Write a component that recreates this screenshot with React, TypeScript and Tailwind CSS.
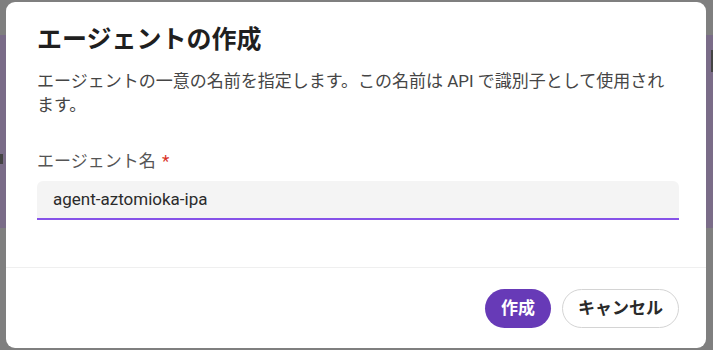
import React from "react";

export default function App() {
  return (
    <div
      className="relative w-[713px] h-[350px] overflow-hidden bg-[#7f7f7f]"
      style={{ fontFamily: "Roboto, 'Noto Sans CJK JP', 'Noto Sans', sans-serif" }}
    >
      {/* dimmed background page */}
      <div className="absolute left-0 right-0 top-[35px] h-[193px] bg-[#7a6c88]" />
      <div className="absolute left-0 top-[154px] w-[3px] h-[10px] bg-[#444]" />
      <div className="absolute right-0 top-[50px] w-[2px] h-[22px] bg-[#444]" />

      {/* dialog */}
      <div className="absolute left-[6px] top-[2px] w-[700px] h-[346px] bg-white rounded-[9px] flex flex-col">
        <div className="pl-[31px] pr-[27px] pt-[22px] pb-[47px]">
          <h2 className="text-[25px] leading-[32px] font-bold text-[#1f1f1f]">
            エージェントの作成
          </h2>
          <p className="mt-[13px] text-[17px] leading-[24px] text-[#454545]">
            エージェントの一意の名前を指定します。この名前は API で識別子として使用されます。
          </p>
          <div className="mt-[32px] text-[17px] leading-[24px] text-[#555]">
            エージェント名 <span className="ml-[2px] text-[#d93025]">*</span>
          </div>
          <div className="mt-[8px] h-[39px] bg-[#f4f4f4] rounded-t-[6px] border-b-2 border-[#8652e8] flex items-center pl-[16px]">
            <span className="text-[17px] text-[#2b2b2b]">agent-aztomioka-ipa</span>
          </div>
        </div>
        <div className="h-px bg-[#efefef]" />
        <div className="flex justify-end gap-[11px] pl-[31px] pr-[27px] pt-[21px]">
          <button className="h-[39px] w-[66px] rounded-full bg-[#673ab7] text-white text-[17px] font-bold">
            作成
          </button>
          <button className="h-[39px] w-[117px] rounded-full bg-white border border-[#d4d4d4] text-[#2a2a2a] text-[17px] font-bold">
            キャンセル
          </button>
        </div>
      </div>
    </div>
  );
}
